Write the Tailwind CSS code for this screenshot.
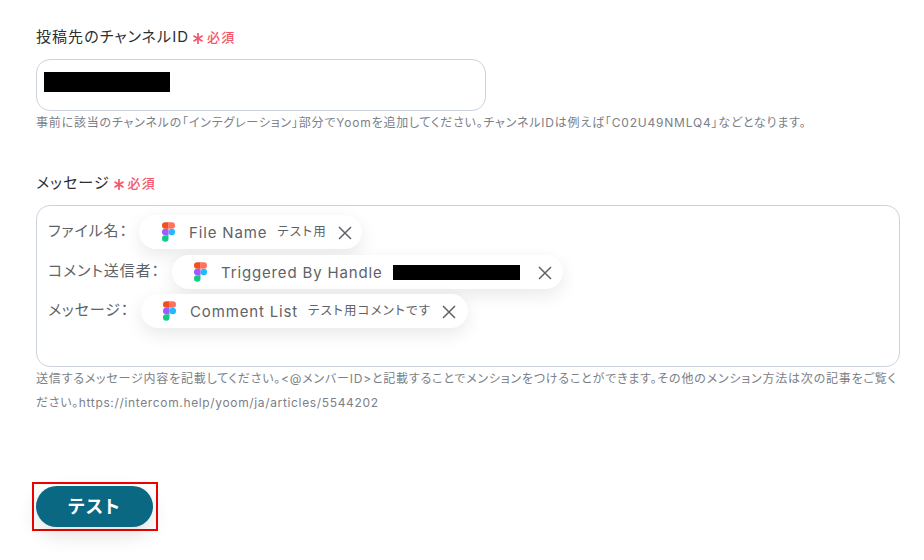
<!DOCTYPE html>
<html lang="ja">
<head>
    <meta charset="UTF-8" />
    <title>Yoom</title>
    <script src="https://cdn.jsdelivr.net/npm/@tailwindcss/browser@4"></script>
</head>
<body class="bg-white h-[560px] w-[924px] overflow-hidden font-['Inter','Noto_Sans_CJK_JP',sans-serif] [font-feature-settings:'palt'] text-[#2b2f33]">

    <main class="pl-[36px] pt-[27px]">
        <!-- Channel ID -->
        <div class="h-[20px] flex items-center text-[15px] tracking-[1.05px] leading-[20px]">
            <span>投稿先のチャンネルID</span>
            <svg class="ml-[4px] mt-[2px] w-[10px] h-[11px]" viewBox="0 0 10 11" fill="none" stroke="#f5566e" stroke-width="1.7"><path d="M5 0v11M.5 2.8l9 5.4M9.5 2.8l-9 5.4"/></svg>
            <span class="ml-[4px] text-[#f5566e] text-[13px] font-medium">必須</span>
        </div>
        <div class="mt-[12px] w-[450px] h-[52px] border border-[#ccd2dc] rounded-[14px] pl-[7px] pt-[12px]">
            <div class="w-[126px] h-[20px] bg-black"></div>
        </div>
        <p class="mt-[2px] text-[12px] tracking-[0.8px] leading-[20px] text-[#7c8087]">事前に該当のチャンネルの「インテグレーション」部分でYoomを追加してください。チャンネルIDは例えば「C02U49NMLQ4」などとなります。</p>

        <!-- Message -->
        <div class="mt-[40px] h-[20px] flex items-center text-[15px] tracking-[1.05px] leading-[20px]">
            <span>メッセージ</span>
            <svg class="ml-[4px] mt-[2px] w-[10px] h-[11px]" viewBox="0 0 10 11" fill="none" stroke="#f5566e" stroke-width="1.7"><path d="M5 0v11M.5 2.8l9 5.4M9.5 2.8l-9 5.4"/></svg>
            <span class="ml-[4px] text-[#f5566e] text-[13px] font-medium">必須</span>
        </div>
        <div class="mt-[12px] w-[864px] h-[162px] border border-[#ccd2dc] rounded-[14px] pl-[11px] pt-[9px] text-[15px] tracking-[0.9px] text-[#5f6368]">
            <div class="h-[34px] flex items-center">
                <span class="w-[91px] mt-[-1px]">ファイル名：</span>
                <div class="h-[34px] w-[223px] rounded-full bg-white shadow-[0_6px_18px_rgba(0,0,0,0.09)] flex items-center pl-[23px]">
                    <svg class="w-[13px] h-[20px] shrink-0" viewBox="0 0 38 57"><path fill="#1abcfe" d="M19 28.5a9.5 9.5 0 1 1 19 0 9.5 9.5 0 0 1-19 0z"/><path fill="#0acf83" d="M0 47.5A9.5 9.5 0 0 1 9.5 38H19v9.5a9.5 9.5 0 1 1-19 0z"/><path fill="#ff7262" d="M19 0v19h9.5a9.5 9.5 0 1 0 0-19H19z"/><path fill="#f24e1e" d="M0 9.5A9.5 9.5 0 0 0 9.5 19H19V0H9.5A9.5 9.5 0 0 0 0 9.5z"/><path fill="#a259ff" d="M0 28.5A9.5 9.5 0 0 0 9.5 38H19V19H9.5A9.5 9.5 0 0 0 0 28.5z"/></svg>
                    <span class="ml-[14px] mt-[2px] text-[15px] tracking-[0.85px]">File Name</span>
                    <span class="ml-[10px] mt-[1px] text-[12.5px] tracking-[1.2px]">テスト用</span>
                    <svg class="ml-[11px] mt-[1px] w-[14px] h-[14px]" viewBox="0 0 14 14" fill="none" stroke="#5f6368" stroke-width="1.5"><path d="M1 1l12 12M13 1L1 13"/></svg>
                </div>
            </div>
            <div class="h-[34px] mt-[6px] flex items-center">
                <span class="w-[124px] mt-[-1px]">コメント送信者：</span>
                <div class="h-[34px] w-[391px] rounded-full bg-white shadow-[0_6px_18px_rgba(0,0,0,0.09)] flex items-center pl-[22px]">
                    <svg class="w-[13px] h-[20px] shrink-0" viewBox="0 0 38 57"><path fill="#1abcfe" d="M19 28.5a9.5 9.5 0 1 1 19 0 9.5 9.5 0 0 1-19 0z"/><path fill="#0acf83" d="M0 47.5A9.5 9.5 0 0 1 9.5 38H19v9.5a9.5 9.5 0 1 1-19 0z"/><path fill="#ff7262" d="M19 0v19h9.5a9.5 9.5 0 1 0 0-19H19z"/><path fill="#f24e1e" d="M0 9.5A9.5 9.5 0 0 0 9.5 19H19V0H9.5A9.5 9.5 0 0 0 0 9.5z"/><path fill="#a259ff" d="M0 28.5A9.5 9.5 0 0 0 9.5 38H19V19H9.5A9.5 9.5 0 0 0 0 28.5z"/></svg>
                    <span class="ml-[14px] mt-[2px] text-[15px] tracking-[0.85px]">Triggered By Handle</span>
                    <div class="ml-[10px] w-[127px] h-[15px] bg-black"></div>
                    <svg class="ml-[18px] mt-[1px] w-[14px] h-[14px]" viewBox="0 0 14 14" fill="none" stroke="#5f6368" stroke-width="1.5"><path d="M1 1l12 12M13 1L1 13"/></svg>
                </div>
            </div>
            <div class="h-[34px] mt-[5px] flex items-center">
                <span class="w-[93px] mt-[-1px]">メッセージ：</span>
                <div class="h-[34px] w-[327px] rounded-full bg-white shadow-[0_6px_18px_rgba(0,0,0,0.09)] flex items-center pl-[22px]">
                    <svg class="w-[13px] h-[20px] shrink-0" viewBox="0 0 38 57"><path fill="#1abcfe" d="M19 28.5a9.5 9.5 0 1 1 19 0 9.5 9.5 0 0 1-19 0z"/><path fill="#0acf83" d="M0 47.5A9.5 9.5 0 0 1 9.5 38H19v9.5a9.5 9.5 0 1 1-19 0z"/><path fill="#ff7262" d="M19 0v19h9.5a9.5 9.5 0 1 0 0-19H19z"/><path fill="#f24e1e" d="M0 9.5A9.5 9.5 0 0 0 9.5 19H19V0H9.5A9.5 9.5 0 0 0 0 9.5z"/><path fill="#a259ff" d="M0 28.5A9.5 9.5 0 0 0 9.5 38H19V19H9.5A9.5 9.5 0 0 0 0 28.5z"/></svg>
                    <span class="ml-[14px] mt-[2px] text-[15px] tracking-[0.85px]">Comment List</span>
                    <span class="ml-[10px] mt-[1px] text-[12.5px] tracking-[1.2px]">テスト用コメントです</span>
                    <svg class="ml-[11px] mt-[1px] w-[14px] h-[14px]" viewBox="0 0 14 14" fill="none" stroke="#5f6368" stroke-width="1.5"><path d="M1 1l12 12M13 1L1 13"/></svg>
                </div>
            </div>
        </div>
        <div class="w-[870px] text-[12px] leading-[24px] text-[#7c8087]">
            <p class="tracking-[0.8px]">送信するメッセージ内容を記載してください。&lt;@メンバーID&gt;と記載することでメンションをつけることができます。その他のメンション方法は次の記事をご覧く</p>
            <p class="tracking-[0.65px]">ださい。https://intercom.help/yoom/ja/articles/5544202</p>
        </div>

        <!-- Test button -->
        <div class="mt-[67px] ml-[-4px] w-[126px] h-[49px] border-2 border-[#f00000] flex items-center pl-[2px]">
            <button class="w-[117px] h-[41px] rounded-full bg-[#0b6882] text-white font-bold text-[18px] tracking-[1.5px] shadow-[0_8px_20px_rgba(0,0,0,0.12)]">テスト</button>
        </div>
    </main>
</body>
</html>
